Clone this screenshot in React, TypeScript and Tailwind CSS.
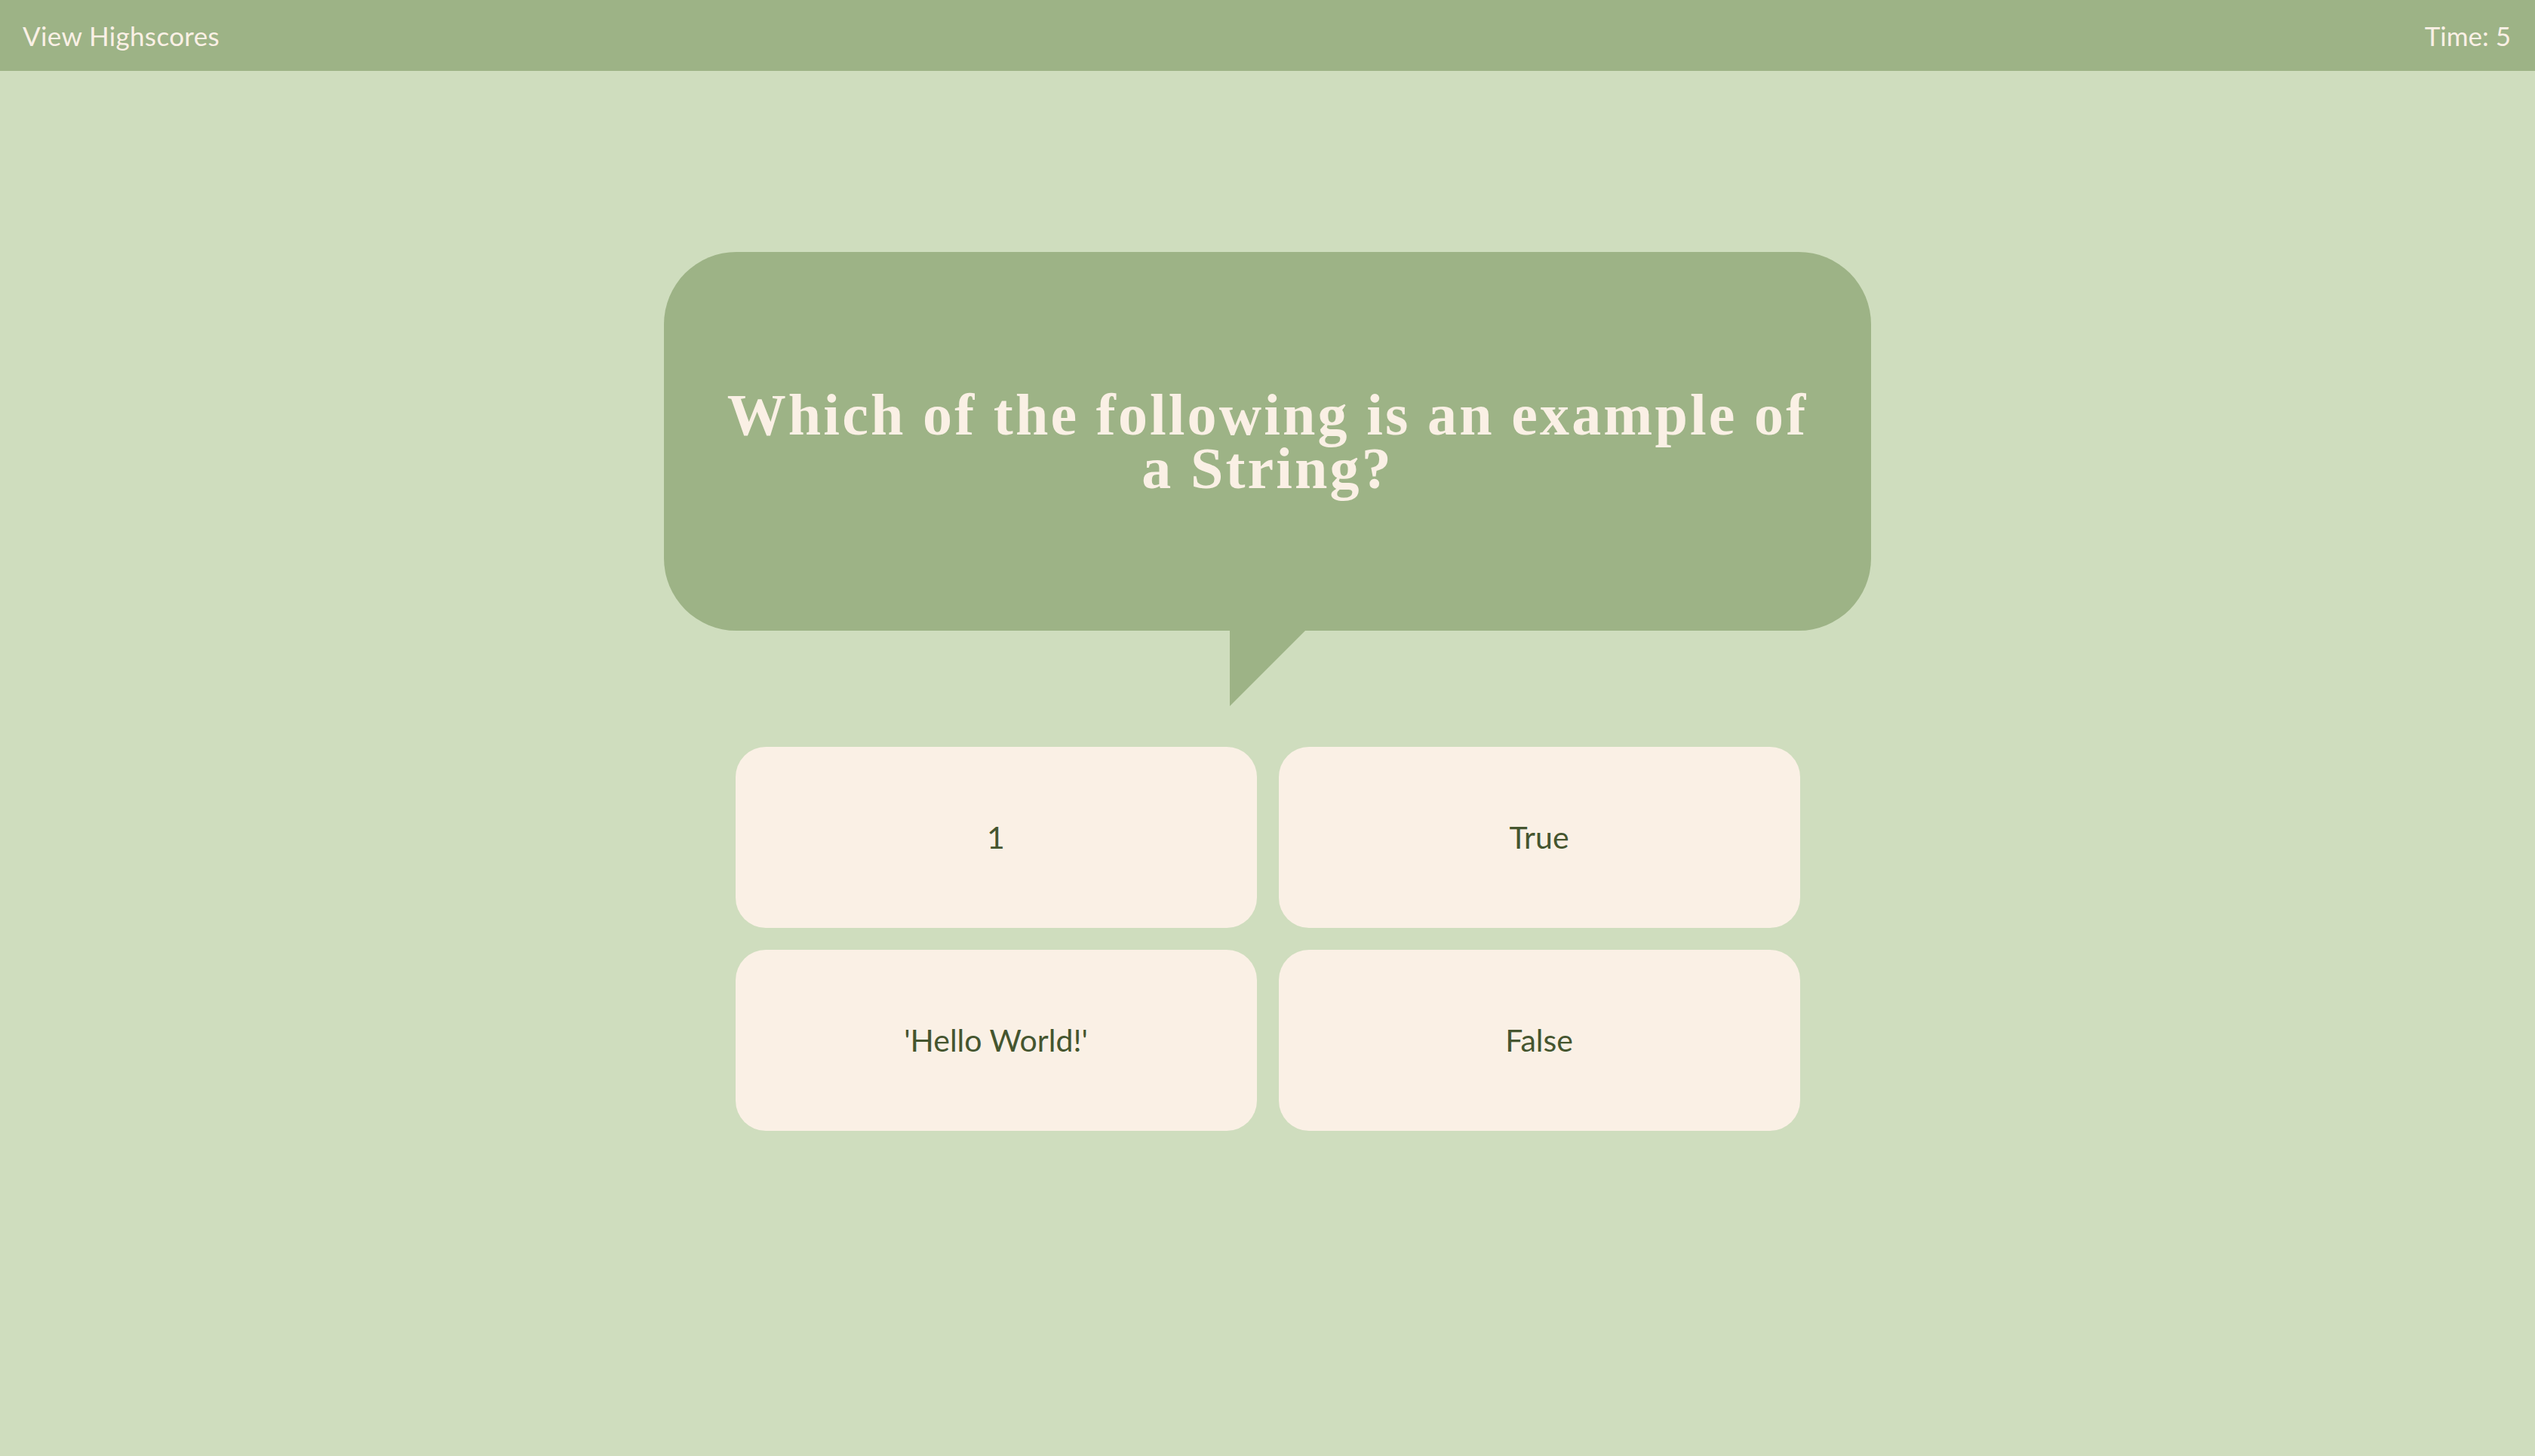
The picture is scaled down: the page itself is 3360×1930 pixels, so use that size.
import React from "react";

const answers = ["1", "True", "'Hello World!'", "False"];

const App: React.FC = () => {
  return (
    <div className="min-h-screen w-full bg-[#cfddbe] font-['Lato','Open_Sans',sans-serif]">
      {/* Top bar */}
      <header className="flex h-[94px] items-center justify-between bg-[#9db386] px-[30px] text-[35px] text-[#faf0e5]">
        <a href="#" className="tracking-[0.01em]">
          View Highscores
        </a>
        <span className="pr-[2px]">Time: 5</span>
      </header>

      <main className="flex flex-col items-center pt-[240px]">
        {/* Question bubble */}
        <div className="relative flex h-[502px] w-[1600px] items-center justify-center rounded-[96px] bg-[#9db386] px-[60px]">
          <h1 className="text-center font-['Liberation_Serif','Times_New_Roman',serif] text-[78px] font-bold leading-[71px] tracking-[0.04em] text-[#faf0e5]">
            Which of the following is an example of
            <br />a String?
          </h1>
          <div className="absolute left-[750px] top-full h-0 w-0 border-r-[100px] border-t-[100px] border-r-transparent border-t-[#9db386]"></div>
        </div>

        {/* Answers */}
        <div className="mt-[154px] grid grid-cols-[691px_691px] gap-[29px]">
          {answers.map((answer, index) => (
            <button
              key={index}
              className="flex h-[240px] items-center justify-center rounded-[40px] bg-[#faf0e5] text-[41px] text-[#45552f]"
            >
              {answer}
            </button>
          ))}
        </div>
      </main>
    </div>
  );
};

export default App;
